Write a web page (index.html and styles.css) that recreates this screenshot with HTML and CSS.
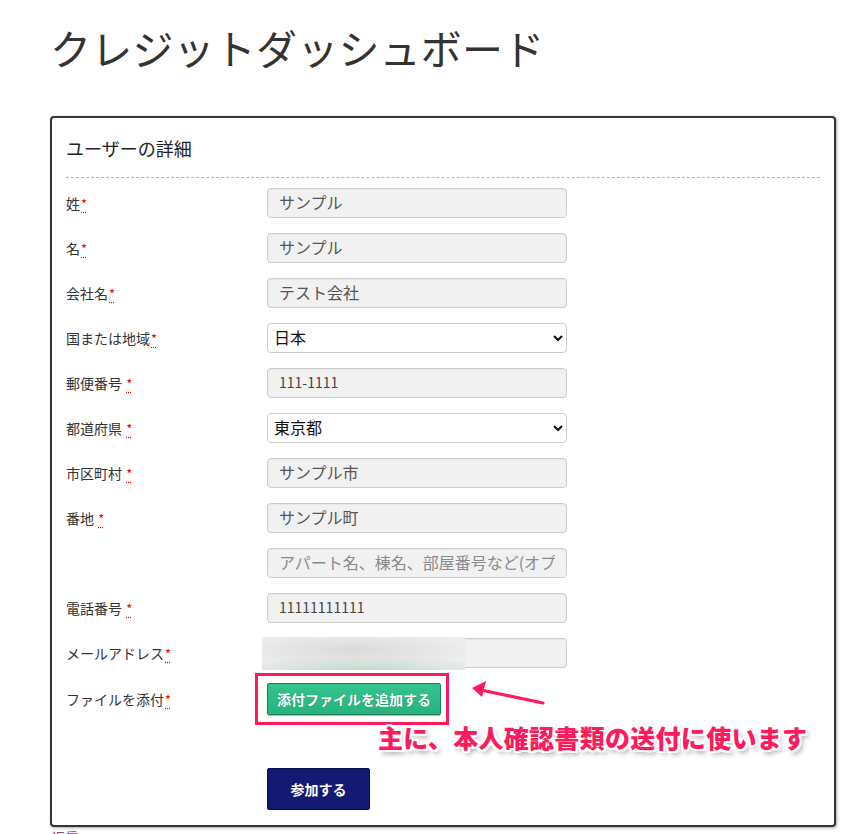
FILE: index.html
```html
<!DOCTYPE html>
<html lang="ja">
<head>
<meta charset="utf-8">
<title>クレジットダッシュボード</title>
<link rel="stylesheet" href="styles.css">
</head>
<body>
<div class="page">
  <h1 class="title">クレジットダッシュボード</h1>
  <div class="card">
    <div class="card-head">ユーザーの詳細</div>
    <form class="form">
      <div class="row"><label class="lbl">姓<abbr class="req" title="required">*</abbr></label><input class="inp" value="サンプル" readonly></div>
      <div class="row"><label class="lbl">名<abbr class="req" title="required">*</abbr></label><input class="inp" value="サンプル" readonly></div>
      <div class="row"><label class="lbl">会社名<abbr class="req" title="required">*</abbr></label><input class="inp" value="テスト会社" readonly></div>
      <div class="row"><label class="lbl">国または地域<abbr class="req" title="required">*</abbr></label><select class="sel"><option>日本</option></select></div>
      <div class="row"><label class="lbl">郵便番号 <abbr class="req" title="required">*</abbr></label><input class="inp num" value="111-1111" readonly></div>
      <div class="row"><label class="lbl">都道府県 <abbr class="req" title="required">*</abbr></label><select class="sel"><option>東京都</option></select></div>
      <div class="row"><label class="lbl">市区町村 <abbr class="req" title="required">*</abbr></label><input class="inp" value="サンプル市" readonly></div>
      <div class="row"><label class="lbl">番地 <abbr class="req" title="required">*</abbr></label><input class="inp" value="サンプル町" readonly></div>
      <div class="row"><span class="lbl"></span><input class="inp" placeholder="アパート名、棟名、部屋番号など(オプション)" readonly></div>
      <div class="row"><label class="lbl">電話番号 <abbr class="req" title="required">*</abbr></label><input class="inp num" value="11111111111" readonly></div>
      <div class="row"><label class="lbl">メールアドレス<abbr class="req" title="required">*</abbr></label>
        <div class="mailwrap"><input class="inp" value="" readonly><div class="blur"></div></div></div>
      <div class="row row-file"><label class="lbl">ファイルを添付<abbr class="req" title="required">*</abbr></label>
        <div class="filewrap">
          <button type="button" class="btn-file">添付ファイルを追加する</button>
          <div class="hl"></div>
          <svg class="arrow" width="80" height="30" viewBox="0 0 80 30">
            <line x1="74" y1="23" x2="12" y2="10" stroke="#ff1a5e" stroke-width="3.2" stroke-linecap="round"/>
            <polygon points="3,8 17,1 13,17" fill="#ff1a5e"/>
          </svg>
          <div class="note">主に、本人確認書類の送付に使います</div>
        </div>
      </div>
      <div class="row row-submit"><span class="lbl"></span><button type="button" class="btn-submit">参加する</button></div>
    </form>
  </div>
  <div class="below">返信</div>
</div>
</body>
</html>
```
FILE: styles.css
```css
html, body {
  margin: 0;
  padding: 0;
  background: #fff;
}
body {
  font-family: "Noto Sans CJK JP", "Noto Sans", sans-serif;
  color: #333;
  width: 866px;
  height: 834px;
  overflow: hidden;
}
.page {
  padding: 23px 0 0 50px;
}
.title {
  margin: 0;
  font-size: 41px;
  line-height: 48px;
  font-weight: 400;
  color: #333;
  letter-spacing: 0.2px;
}
.card {
  margin-top: 45px;
  border: 2px solid #333;
  border-radius: 4px;
  box-shadow: 1px 1px 3px rgba(0,0,0,0.35);
  padding: 0 14px 15px 14px;
  box-sizing: content-box;
  width: 754px;
  background: #fff;
}
.card-head {
  padding: 18px 0 17px 0;
  font-size: 18px;
  line-height: 24px;
  color: #222;
  border-bottom: 1px dashed #b5b5b5;
}
.form {
  padding-top: 10px;
  display: flex;
  flex-direction: column;
  gap: 15px;
}
.row {
  display: grid;
  grid-template-columns: 201px 300px;
  align-items: center;
  height: 30px;
}
.row-file { height: 32px; }
.row-submit { height: 42px; margin-top: 38px; }
.lbl {
  font-size: 14px;
  color: #333;
  line-height: 18px;
}
.req {
  color: #e00;
  text-decoration: underline dotted #e00;
  text-underline-offset: 3px;
  font-size: 13px;
  margin-left: 1px;
}
.inp {
  box-sizing: border-box;
  width: 300px;
  height: 30px;
  border: 1px solid #ccc;
  border-radius: 4px;
  background: #f1f1f1;
  padding: 0 11px 2px 11px;
  font-family: "Noto Sans CJK JP", sans-serif;
  font-size: 16px;
  color: #555;
  outline: none;
  box-shadow: inset 0 1px 1px rgba(0,0,0,0.04);
}
.inp.num { font-size: 14px; color: #444; }
.inp::placeholder { color: #8a8a8a; }
.sel {
  box-sizing: border-box;
  width: 300px;
  height: 30px;
  border: 1px solid #ccc;
  border-radius: 4px;
  background: #fff;
  padding: 0 2px 2px 2px;
  font-family: "Noto Sans CJK JP", sans-serif;
  font-size: 16px;
  color: #111;
}
.mailwrap {
  position: relative;
  width: 300px;
  height: 30px;
}
.blur {
  position: absolute;
  left: -5px;
  top: -1px;
  width: 203px;
  height: 33px;
  background:
    radial-gradient(ellipse 70% 40% at 50% 100%, rgba(190,215,200,0.9), rgba(190,215,200,0) 100%),
    radial-gradient(ellipse 60% 60% at 45% 40%, #dadada, rgba(218,218,218,0) 100%),
    #eeeeee;
}
.filewrap {
  position: relative;
  width: 300px;
  height: 32px;
}
.btn-file {
  height: 32px;
  width: 174px;
  border: 1px solid #1d7f58;
  border-radius: 2px;
  background: linear-gradient(#33c48f, #27b27d);
  color: #fff;
  font-family: "Noto Sans CJK JP", sans-serif;
  font-weight: 700;
  font-size: 14px;
  padding: 0;
  text-shadow: 0 0 1px rgba(0,0,0,0.3);
  box-shadow: 0 1px 1px rgba(0,0,0,0.3);
}
.hl {
  position: absolute;
  left: -12px;
  top: -10px;
  width: 188px;
  height: 46px;
  border: 3px solid #ff1a5e;
  pointer-events: none;
}
.arrow {
  position: absolute;
  left: 202px;
  top: -3px;
}
.note {
  position: absolute;
  left: 111px;
  top: 38px;
  white-space: nowrap;
  font-size: 25px;
  line-height: 32px;
  font-weight: 900;
  color: #ff1a5e;
  letter-spacing: 0.3px;
  text-shadow:
    2px 0 0 #fff, -2px 0 0 #fff, 0 2px 0 #fff, 0 -2px 0 #fff,
    2px 2px 0 #fff, -2px -2px 0 #fff, 2px -2px 0 #fff, -2px 2px 0 #fff,
    3px 4px 5px rgba(0,0,0,0.35);
}
.btn-submit {
  height: 42px;
  width: 103px;
  border: 1px solid #0c0f55;
  border-radius: 2px;
  background: #141a72;
  color: #fff;
  font-family: "Noto Sans CJK JP", sans-serif;
  font-weight: 700;
  font-size: 14px;
  padding: 0;
}
.below {
  margin: 1px 0 0 2px;
  font-size: 13px;
  color: #8a4a7e;
  line-height: 18px;
}
```
